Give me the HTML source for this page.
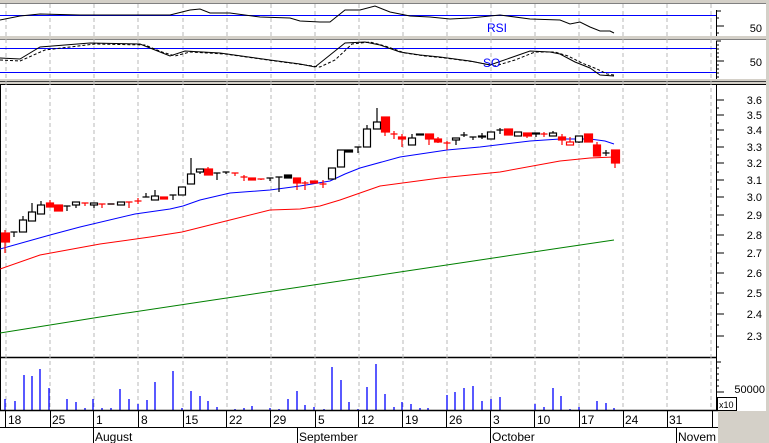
<!DOCTYPE html>
<html><head><meta charset="utf-8"><style>
html,body{margin:0;padding:0;background:#fff;width:769px;height:443px;overflow:hidden}
svg{display:block}
text{font-family:"Liberation Sans",Arial,sans-serif}
</style></head><body>
<svg width="769" height="443" viewBox="0 0 769 443" xmlns="http://www.w3.org/2000/svg">
<rect width="769" height="443" fill="#fff"/>
<!-- panel borders -->
<rect x="0" y="0" width="769" height="3" fill="#d4d0c8"/>
<rect x="0" y="36" width="769" height="3" fill="#d4d0c8"/>
<rect x="0" y="79" width="769" height="5" fill="#d4d0c8"/>
<line x1="0" y1="3.5" x2="767" y2="3.5" stroke="#808080"/>
<line x1="0" y1="39.5" x2="767" y2="39.5" stroke="#808080"/>
<line x1="0" y1="81.5" x2="767" y2="81.5" stroke="#404040"/>
<line x1="0" y1="84.5" x2="767" y2="84.5" stroke="#000"/>
<line x1="0" y1="357.5" x2="717" y2="357.5" stroke="#000" stroke-width="1.5"/>
<rect x="766" y="0" width="3" height="443" fill="#d4d0c8"/>
<line x1="0.5" y1="85" x2="0.5" y2="410" stroke="#000"/>
<!-- grid -->
<g stroke="#b8b8b8" stroke-dasharray="4,3" stroke-width="1">
<path d="M6 4V410M50 4V410M94 4V410M138 4V410M183 4V410M227 4V410M271 4V410M315 4V410M359 4V410M403 4V410M447 4V410M491 4V410M535 4V410M579 4V410M623 4V410M667 4V410M711 4V410"/>
</g>
<!-- RSI -->
<line x1="0" y1="15.5" x2="716" y2="15.5" stroke="#0000ff"/>
<polyline fill="none" stroke="#000" points="0,20 20,16 40,14 80,15 170,15 190,10 200,9 210,13 230,13 260,17 290,18 300,21 320,22 330,22 345,10 360,10 375,6 390,12 410,16 430,17 450,19 470,18 500,15 530,19 560,20 570,24 580,22 590,27 600,31 610,31 614,33"/>
<text x="487" y="32" font-size="12" fill="#0000ff">RSI</text>
<!-- SO -->
<line x1="0" y1="48.5" x2="716" y2="48.5" stroke="#0000ff"/>
<line x1="0" y1="72.5" x2="716" y2="72.5" stroke="#0000ff"/>
<polyline fill="none" stroke="#000" stroke-dasharray="3,2" points="0,60 20,61 45,50 95,44 145,45 162,52 175,56 190,52 225,54 275,61 305,65 320,67 335,60 352,44 370,42 385,46 405,53 425,56 445,58 475,62 495,66 515,60 535,52 555,52 568,56 582,63 597,69 607,74 614,75"/>
<polyline fill="none" stroke="#000" points="0,58 20,59 40,47 90,43 140,44 155,50 170,56 185,51 220,53 270,60 300,64 315,67 330,55 345,43 365,42 380,45 400,52 420,55 440,57 470,61 490,65 510,58 530,51 550,52 560,54 575,62 590,68 600,75 614,76"/>
<text x="483" y="67" font-size="12" fill="#0000ff">SO</text>
<!-- right axes -->
<line x1="716.5" y1="10" x2="716.5" y2="36" stroke="#000"/>
<line x1="716.5" y1="41" x2="716.5" y2="79" stroke="#000"/>
<line x1="716.5" y1="85" x2="716.5" y2="410" stroke="#000"/>
<g stroke="#000">
<path d="M716 11h5M716 18h3M716 26h8M716 33h3M716 41h5M716 45h3M716 49h3M716 53h3M716 57h3M716 61h8M716 65h3M716 69h3M716 73h3M716 77h3"/>
<path d="M716 100h8M716 108h3M716 115h8M716 123h3M716 130h8M716 139h3M716 147h8M716 155h3M716 163h8M716 172h3M716 180h8M716 189h3M716 197h8M716 206h3M716 215h8M716 225h3M716 235h8M716 244h3M716 253h8M716 263h3M716 273h8M716 283h3M716 293h8M716 304h3M716 314h8M716 325h3M716 336h8M716 347h3"/>
<path d="M716 362h5M716 368h3M716 374h3M716 380h3M716 386h3M716 392h8M716 398h3"/>
</g>
<g font-size="11" fill="#000" text-anchor="end">
<text x="762" y="32">50</text>
<text x="762" y="66">50</text>
<text x="762" y="104">3.6</text><text x="762" y="119">3.5</text><text x="762" y="134">3.4</text><text x="762" y="151">3.3</text><text x="762" y="167">3.2</text><text x="762" y="184">3.1</text><text x="762" y="201">3.0</text><text x="762" y="219">2.9</text><text x="762" y="239">2.8</text><text x="762" y="257">2.7</text><text x="762" y="277">2.6</text><text x="762" y="297">2.5</text><text x="762" y="318">2.4</text><text x="762" y="340">2.3</text>
<text x="765" y="393">50000</text>
</g>
<rect x="717.5" y="397.5" width="19" height="13" fill="#fff" stroke="#000"/>
<text x="719" y="408" font-size="9">x10</text>
<!-- MAs -->
<polyline fill="none" stroke="#008000" points="0,333 100,317 200,302 300,287 400,272 500,257 560,248 614,240"/>
<polyline fill="none" stroke="#ff0000" points="0,269 40,255 100,244 150,237 182,232 230,220 270,210 300,209 320,206 340,200 380,186 440,178 500,172 560,161 590,158 614,157"/>
<polyline fill="none" stroke="#0000ff" points="0,249 50,235 80,227 135,214 170,209 183,206 200,200 230,193 270,190 300,186 330,181 345,174 360,168 400,157 447,150 480,147 530,141 560,139 590,139 605,141 614,144"/>
<!-- candles -->
<g stroke-width="1.2">
<g stroke="#ff0000" fill="#ff0000">
<path d="M5 230V253M50 200V207M58 205V211M85 203V206M102 204V208M129 202V208M138 198V204M164 197V199M208 167V175M235 173V176M244 175V181M252 178V180M261 179V180M297 178V190M305 181V190M314 181V183M323 180V188M385 117V136M394 131V139M402 134V147M429 134V145M438 137V143M447 141V150M508 129V135M527 133V138M544 132V137M562 134V145M570 137V145M588 134V142M597 142V156M615 150V168"/>
<path d="M81.5 203h7M98.5 204h7M107.5 204h7M125.5 202h7M134.5 201h7M231.5 173h7M240.5 177h7M257.5 179h7M301.5 183h7M319.5 184h7M390.5 134h7M443.5 143h7M540.5 134h7"/>
<rect x="1.5" y="233" width="8" height="9"/><rect x="46.5" y="203" width="7" height="4"/><rect x="54.5" y="205" width="8" height="6"/><rect x="160.5" y="197" width="7" height="2"/><rect x="204.5" y="169" width="8" height="6"/><rect x="248.5" y="178" width="7" height="2"/><rect x="293.5" y="178" width="7" height="5"/><rect x="310.5" y="181" width="7" height="2"/><rect x="381.5" y="117" width="8" height="15"/><rect x="398.5" y="137" width="7" height="2"/><rect x="425.5" y="134" width="8" height="5"/><rect x="434.5" y="139" width="7" height="3"/><rect x="504.5" y="129" width="8" height="6"/><rect x="523.5" y="133" width="8" height="3"/><rect x="558.5" y="137" width="7" height="3"/><rect x="584.5" y="134" width="8" height="8"/><rect x="593.5" y="145" width="7" height="11"/><rect x="611.5" y="150" width="8" height="13"/>
<rect x="566.5" y="142" width="7" height="3" fill="#fff"/>
</g>
<g stroke="#000" fill="#fff">
<path d="M14 232V237M23 216V232M32 203V221M41 201V214M67 206V211M76 202V208M94 203V208M121 202V205M146 193V197M155 190V200M173 195V200M182 187V195M191 158V184M200 169V174M217 173V180M226 172V174M270 178V181M279 177V192M288 175V178M332 168V179M341 150V167M349 150V152M358 147V153M367 125V147M377 108V129M412 134V145M420 134V135M456 138V145M464 132V137M473 137V140M482 133V139M491 132V139M500 128V134M518 132V136M536 133V137M553 131V136M579 136V143M606 150V156"/>
<path d="M10.5 232h7M63.5 206h7M142.5 197h7M169.5 195h7M213.5 173h7M222.5 172h7M266.5 178h7M275.5 177h7M354.5 147h7M460.5 135h7M469.5 137h7M496.5 130h7M602.5 153h7M107.5 204h7"/>
<rect x="19.5" y="220" width="7" height="12"/><rect x="28.5" y="212" width="7" height="9"/><rect x="37.5" y="205" width="7" height="9"/><rect x="72.5" y="202" width="7" height="3"/><rect x="90.5" y="203" width="7" height="2"/><rect x="117.5" y="202" width="7" height="3"/><rect x="151.5" y="196" width="7" height="4"/><rect x="178.5" y="187" width="7" height="8"/><rect x="187.5" y="174" width="7" height="10"/><rect x="196.5" y="169" width="7" height="3"/><rect x="328.5" y="168" width="7" height="11"/><rect x="337.5" y="150" width="7" height="17"/><rect x="363.5" y="129" width="7" height="18"/><rect x="373.5" y="122" width="7" height="7"/><rect x="408.5" y="138" width="7" height="7"/><rect x="452.5" y="138" width="7" height="2"/><rect x="487.5" y="132" width="7" height="7"/><rect x="514.5" y="132" width="7" height="4"/><rect x="549.5" y="133" width="7" height="3"/><rect x="575.5" y="136" width="7" height="6"/>
<rect x="284.5" y="175" width="7" height="3" fill="#000"/><rect x="345.5" y="150" width="7" height="2" fill="#000"/><rect x="416.5" y="134" width="7" height="1" fill="#000"/><rect x="478.5" y="136" width="7" height="1" fill="#000"/><rect x="532.5" y="133" width="7" height="1" fill="#000"/>
</g>
</g>
<!-- volume -->
<path stroke="#0000ff" stroke-width="1.3" fill="none" d="M5 410V399M15 410V401M24 410V375M32 410V376M40 410V369M49 410V388M67 410V399M76 410V402M85 410V408M93 410V399M102 410V408M111 410V408M120 410V389M129 410V399M138 410V404M147 410V400M155 410V382M173 410V371M182 410V408M191 410V391M200 410V396M208 410V401M217 410V407M235 410V409M244 410V408M252 410V406M270 410V408M279 410V409M288 410V399M297 410V391M305 410V405M314 410V407M324 410V409M332 410V367M341 410V380M349 410V402M358 410V409M367 410V387M376 410V364M385 410V394M394 410V407M402 410V402M411 410V404M420 410V408M428 410V408M447 410V395M455 410V392M464 410V388M473 410V386M482 410V401M491 410V399M500 410V397M535 410V404M544 410V407M553 410V388M561 410V396M570 410V409M579 410V407M597 410V401M606 410V403M614 410V408"/>
<!-- date rows -->
<line x1="0" y1="410.5" x2="718" y2="410.5" stroke="#000" stroke-width="1.5"/>
<line x1="0" y1="427.5" x2="718" y2="427.5" stroke="#000"/>
<path stroke="#000" d="M5.5 411V427M50.5 411V427M93.5 411V427M138.5 411V427M183.5 411V427M226.5 411V427M270.5 411V427M315.5 411V427M358.5 411V427M402.5 411V427M446.5 411V427M490.5 411V427M534.5 411V427M579.5 411V427M623.5 411V427M667.5 411V427M712.5 411V427M93.5 428V443M297.5 428V443M490.5 428V443M676.5 428V443"/>
<g font-size="12" fill="#000">
<text x="8" y="424">18</text><text x="52" y="424">25</text><text x="96" y="424">1</text><text x="141" y="424">8</text><text x="185" y="424">15</text><text x="229" y="424">22</text><text x="273" y="424">29</text><text x="318" y="424">5</text><text x="361" y="424">12</text><text x="405" y="424">19</text><text x="449" y="424">26</text><text x="493" y="424">3</text><text x="537" y="424">10</text><text x="581" y="424">17</text><text x="625" y="424">24</text><text x="669" y="424">31</text>
<text x="95" y="441">August</text><text x="299" y="441">September</text><text x="492" y="441">October</text><text x="678" y="441">Novem</text>
</g>
<rect x="718" y="411" width="51" height="32" fill="#d4d0c8"/>
</svg>
</body></html>
